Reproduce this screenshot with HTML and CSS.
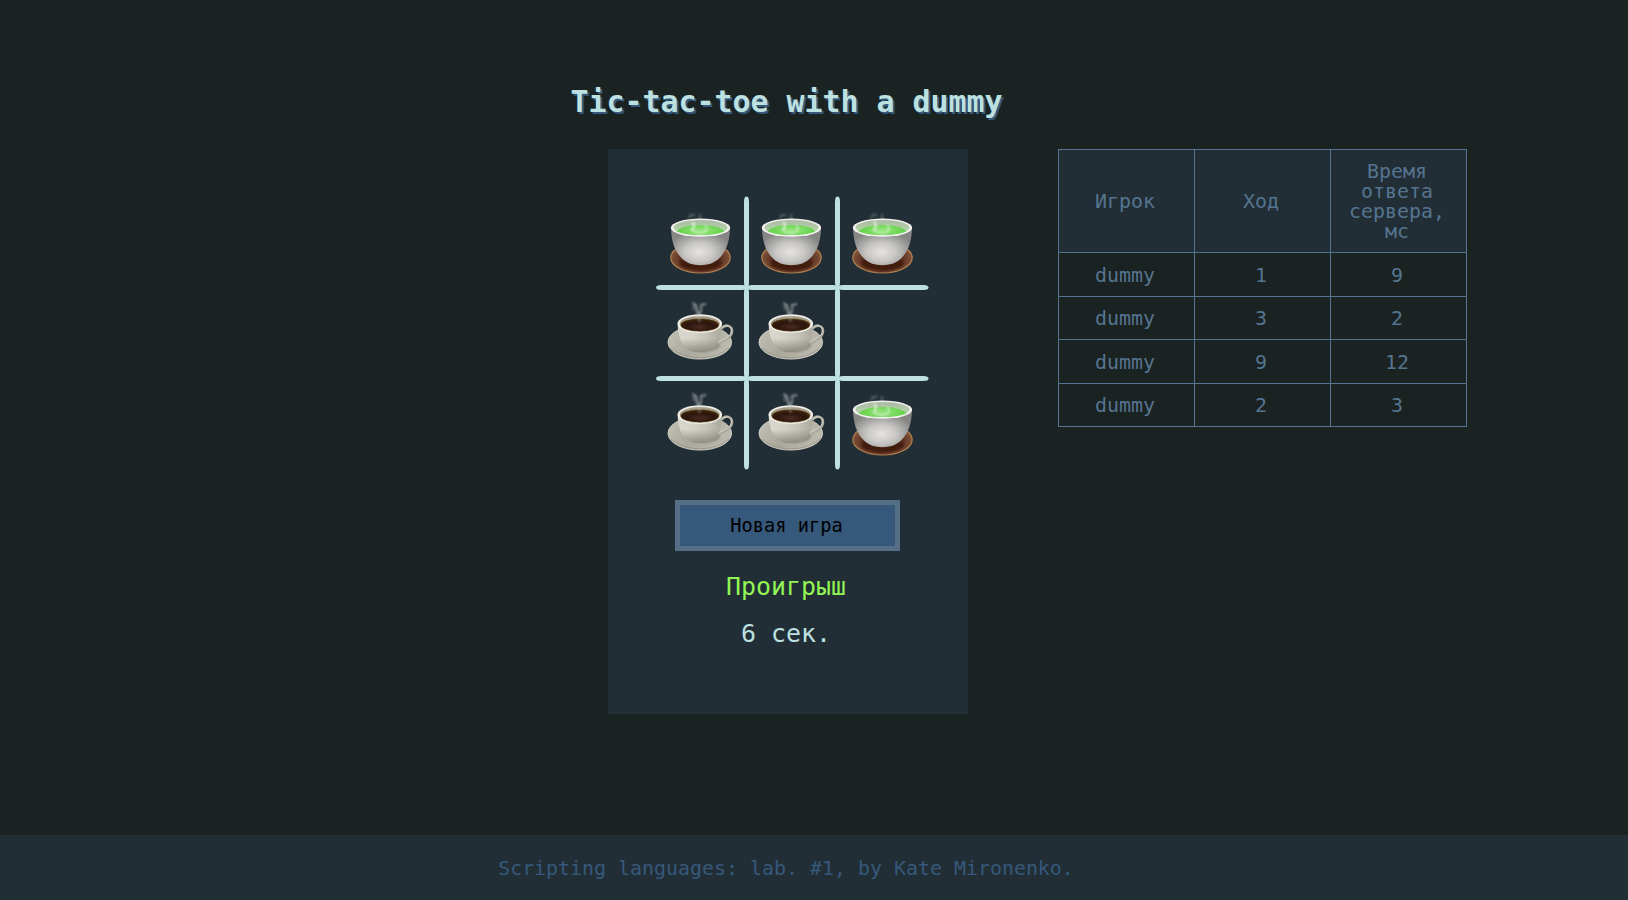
FILE: index.html
```html
<!DOCTYPE html>
<html lang="ru">
<head>
<meta charset="utf-8">
<title>Tic-tac-toe with a dummy</title>
<link rel="stylesheet" href="styles.css">
</head>
<body>
<svg class="defs" width="0" height="0" aria-hidden="true">
  <defs>
    <radialGradient id="bowl" cx=".48" cy=".65" r=".55"><stop offset="0" stop-color="#e6e4e3"/><stop offset=".45" stop-color="#c8c7c6"/><stop offset="1" stop-color="#868685"/></radialGradient>
    <radialGradient id="wood" cx=".5" cy=".55" r=".5"><stop offset="0" stop-color="#35150d"/><stop offset=".6" stop-color="#552b1c"/><stop offset="1" stop-color="#80523a"/></radialGradient>
    <radialGradient id="green" cx=".5" cy=".35" r=".6"><stop offset="0" stop-color="#96e67e"/><stop offset="1" stop-color="#57cd3b"/></radialGradient>
    <linearGradient id="inside" x2="0" y2="1"><stop offset="0" stop-color="#a9b9a2"/><stop offset="1" stop-color="#b9dfac"/></linearGradient>
    <linearGradient id="china" x2="1" y2="0"><stop offset="0" stop-color="#d8d6cd"/><stop offset=".3" stop-color="#d6d4ca"/><stop offset=".65" stop-color="#c7c5ba"/><stop offset="1" stop-color="#aaa89c"/></linearGradient>
    <linearGradient id="china-shade" x2="0" y2="1"><stop offset=".5" stop-color="#77756b" stop-opacity="0"/><stop offset="1" stop-color="#77756b" stop-opacity=".75"/></linearGradient>
    <linearGradient id="plate" x2="1" y2=".3"><stop offset="0" stop-color="#c5c3b8"/><stop offset=".5" stop-color="#aaa89c"/><stop offset="1" stop-color="#bbb9ae"/></linearGradient>
    <radialGradient id="black" cx=".5" cy=".65" r=".6"><stop offset="0" stop-color="#4a2c20"/><stop offset=".6" stop-color="#2b150d"/><stop offset="1" stop-color="#3d250c"/></radialGradient>
    <filter id="soft" x="-30%" y="-30%" width="160%" height="160%"><feGaussianBlur stdDeviation=".9"/></filter>
    <clipPath id="tea-clip"><ellipse cx="44.5" cy="31.9" rx="27" ry="7.2"/></clipPath>

    <symbol id="tea" viewBox="0 0 91 91">
      <ellipse cx="44.5" cy="61.7" rx="29.7" ry="15.3" fill="url(#wood)" stroke="#b1814f" stroke-width="1.2"/>
      <ellipse cx="44.5" cy="67" rx="21" ry="7.5" fill="#431b10" filter="url(#soft)"/>
      <path d="M15 31.5C15.3 44 18 55 26 62.5C31 67.3 37 69.2 44.4 69.2S58 67.3 63 62.5C71 55 73.7 44 74 31.5Z" fill="url(#bowl)"/>
      <ellipse cx="44.5" cy="31.7" rx="29.7" ry="9.1" fill="#f0efed"/>
      <ellipse cx="44.5" cy="31.5" rx="27" ry="7.6" fill="url(#inside)"/>
      <ellipse cx="44.5" cy="36.7" rx="24" ry="7.7" fill="url(#green)" clip-path="url(#tea-clip)"/>
      <g fill="none" stroke="#e5f5df" filter="url(#soft)"><path d="M35 34Q42 39 49 36Q53 33 49 29" opacity=".6" stroke-width="2"/><path d="M36 34Q40 29 36 26" opacity=".8" stroke-width="2.5"/><path d="M33 22Q34 18 39 19M44 26V18" opacity=".25" stroke-width="2.2"/></g>
    </symbol>

    <symbol id="coffee" viewBox="0 0 91 91">
      <ellipse cx="43.8" cy="55.3" rx="31.8" ry="16.8" fill="url(#plate)" stroke="#dddbd0" stroke-width=".8"/>
      <path d="M15 61Q26 71 44 70.8T73 61" fill="none" stroke="#898779" stroke-width="1" opacity=".55"/>
      <path d="M63 54Q67 61 56 64L45 66Z" fill="#7f7d72" opacity=".65" filter="url(#soft)"/>
      <path d="M65 42C70 36 76 39 76 44C76 50 70 53 62 56" fill="none" stroke="#aaa99f" stroke-width="2.6"/>
      <path d="M65 41.5C70 36.5 75.8 39 75.5 44C75 49 69 52 62 55" fill="none" stroke="#deded5" stroke-width=".8"/>
      <path d="M21.6 37C22 49 25 57 31 62Q36 65.6 43.8 65.6T57 62C63 57 65.6 49 66 37Z" fill="url(#china)"/>
      <path d="M21.6 37C22 49 25 57 31 62Q36 65.6 43.8 65.6T57 62C63 57 65.6 49 66 37Z" fill="url(#china-shade)"/>
      <ellipse cx="43.8" cy="36.6" rx="22.3" ry="9.3" fill="#efeee8"/>
      <ellipse cx="43.8" cy="36.6" rx="20" ry="7.7" fill="#a19b88"/>
      <ellipse cx="43.8" cy="38" rx="19" ry="6.2" fill="url(#black)" stroke="#60420f" stroke-width=".6"/>
      <g fill="none" stroke="#c9d0d1" filter="url(#soft)"><path d="M43 29Q40 25 41 21Q40 17 36 16M44 27Q46 23 45 18L50 17" opacity=".6" stroke-width="1.8"/><path d="M39 23Q36 20 40 17M43.500 35L43 24" opacity=".35" stroke-width="2.5"/></g>
    </symbol>
  </defs>
</svg>

<main class="page">
  <h1 class="title">Tic-tac-toe with a dummy</h1>
  <section class="panel">
    <div class="board">
      <svg class="lines" viewBox="0 0 273 274" aria-hidden="true">
        <g id="h-line"><rect x="0" y="89" width="91" height="5" rx="5" ry="2.5"/><rect x="91" y="89" width="91" height="5" rx="5" ry="2.5"/><rect x="182" y="89" width="90.500" height="5" rx="5" ry="2.5"/></g>
        <use href="#h-line" y="91"/>
        <g id="v-line"><rect x="88" y="0.5" width="5" height="91" rx="2.5" ry="5"/><rect x="88" y="91.5" width="5" height="91" rx="2.5" ry="5"/><rect x="88" y="182.500" width="5" height="91" rx="2.5" ry="5"/></g>
        <use href="#v-line" x="91"/>
      </svg>
      <div class="cell"><svg><use href="#tea"/></svg></div>
      <div class="cell"><svg><use href="#tea"/></svg></div>
      <div class="cell"><svg><use href="#tea"/></svg></div>
      <div class="cell"><svg><use href="#coffee"/></svg></div>
      <div class="cell"><svg><use href="#coffee"/></svg></div>
      <div class="cell"></div>
      <div class="cell"><svg><use href="#coffee"/></svg></div>
      <div class="cell"><svg><use href="#coffee"/></svg></div>
      <div class="cell"><svg><use href="#tea"/></svg></div>
    </div>
    <button class="new-game">Новая игра</button>
    <p class="result">Проигрыш</p>
    <p class="timer">6 сек.</p>
  </section>
  <table class="log">
    <thead><tr><th>Игрок</th><th>Ход</th><th>Время ответа сервера, мс</th></tr></thead>
    <tbody>
      <tr><td>dummy</td><td>1</td><td>9</td></tr>
      <tr class="short"><td>dummy</td><td>3</td><td>2</td></tr>
      <tr><td>dummy</td><td>9</td><td>12</td></tr>
      <tr class="short"><td>dummy</td><td>2</td><td>3</td></tr>
    </tbody>
  </table>
</main>
<footer class="footer">Scripting languages: lab. #1, by Kate Mironenko.</footer>
</body>
</html>
```
FILE: styles.css
```css
* { box-sizing: border-box; }

body {
  margin: 0;
  height: 900px;
  overflow: hidden;
  display: flex;
  flex-direction: column;
  background: #1b2222;
  color: #bde0e0;
  font: 19.93px/20px "DejaVu Sans Mono", monospace;
}

.defs { position: absolute; }

.page {
  flex: 1;
  display: grid;
  grid-template-columns: 608px 360px 410px;
  grid-template-rows: 149px 565px;
  align-items: start;
}

.title {
  grid-column: 1 / -1;
  width: 1573px;
  margin: 0;
  padding-top: 82px;
  font-size: 29.9px;
  line-height: 40px;
  font-weight: bold;
  text-align: center;
  white-space: nowrap;
  text-shadow: 2px 2px 0 #36587b;
}

.panel {
  grid-column: 2;
  height: 565px;
  padding-top: 47px;
  display: flex;
  flex-direction: column;
  align-items: center;
  background: #222e35;
}

.board {
  position: relative;
  display: grid;
  grid-template-columns: repeat(3, 91px);
  grid-template-rows: repeat(3, 91px);
  width: 273px;
  height: 274px;
  margin-left: 9px;
}

.lines {
  position: absolute;
  inset: 0;
  width: 273px;
  height: 274px;
  fill: #bde0e0;
}

.cell svg {
  display: block;
  width: 91px;
  height: 91px;
}

.new-game {
  width: 225px;
  height: 51px;
  margin: 30px 1px 0 0;
  padding: 0 2px 0 0;
  border: 5px solid #566f87;
  background: #36587b;
  color: #000;
  font: 18.67px/24px "DejaVu Sans Mono", monospace;
}

.result, .timer {
  margin: 0 4px 0 0;
  font-size: 24.92px;
  line-height: 30px;
}

.result { margin-top: 21px; color: #92f554; }
.timer { margin-top: 17px; }

.log {
  width: 409px;
  margin-left: 90px;
  border-collapse: collapse;
  table-layout: fixed;
  color: #557490;
  text-align: center;
}

.log th, .log td {
  padding: 2px 11px 0 8px;
  border: 1px solid #557490;
  font-weight: normal;
}

.log th { height: 103px; background: #222e35; }
.log td { height: 44px; }
.log .short td { height: 43px; }

.footer {
  height: 65px;
  padding: 24px 56px 0 0;
  background: #222e35;
  color: #36587b;
  text-align: center;
}
```
